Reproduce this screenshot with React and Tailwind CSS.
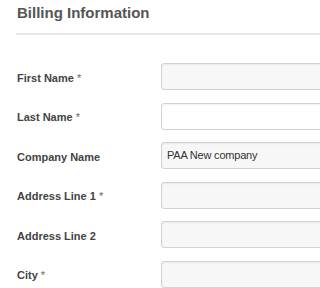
import React from "react";

const fields = [
  { label: "First Name", req: true, value: "", bg: "bg-[#f7f7f7]" },
  { label: "Last Name", req: true, value: "", bg: "bg-white" },
  { label: "Company Name", req: false, value: "PAA New company", bg: "bg-[#f7f7f7]" },
  { label: "Address Line 1", req: true, value: "", bg: "bg-[#f7f7f7]" },
  { label: "Address Line 2", req: false, value: "", bg: "bg-[#f7f7f7]" },
  { label: "City", req: true, value: "", bg: "bg-[#f7f7f7]" },
];

export default function App() {
  return (
    <div className="w-full h-[288px] overflow-hidden bg-white pl-[17px] font-['Liberation_Sans',Arial,sans-serif]">
      <h2 className="pt-[3px] text-[15px] leading-[20px] font-bold text-[#555555]">
        Billing Information
      </h2>
      <div className="mt-[10px] -ml-px w-[400px] h-[2px] bg-[#e8e8e8]" />
      <div className="mt-[28px] flex flex-col gap-[12.5px]">
        {fields.map((f) => (
          <div key={f.label} className="flex items-center h-[27px]">
            <div className="w-[144px] shrink-0 pt-[3px] text-[11px] leading-[13px] font-bold text-[#444444]">
              {f.label}
              {f.req && <span className="font-normal text-[#666666]"> *</span>}
            </div>
            <div
              className={`h-[27px] w-[260px] shrink-0 rounded-[3px] border border-[#d2d2d2] ${f.bg} shadow-[inset_0_1px_2px_rgba(0,0,0,0.06)] flex items-center pl-[5px] text-[11px] text-[#333333] tracking-[-0.2px]`}
            >
              {f.value}
            </div>
          </div>
        ))}
      </div>
    </div>
  );
}
